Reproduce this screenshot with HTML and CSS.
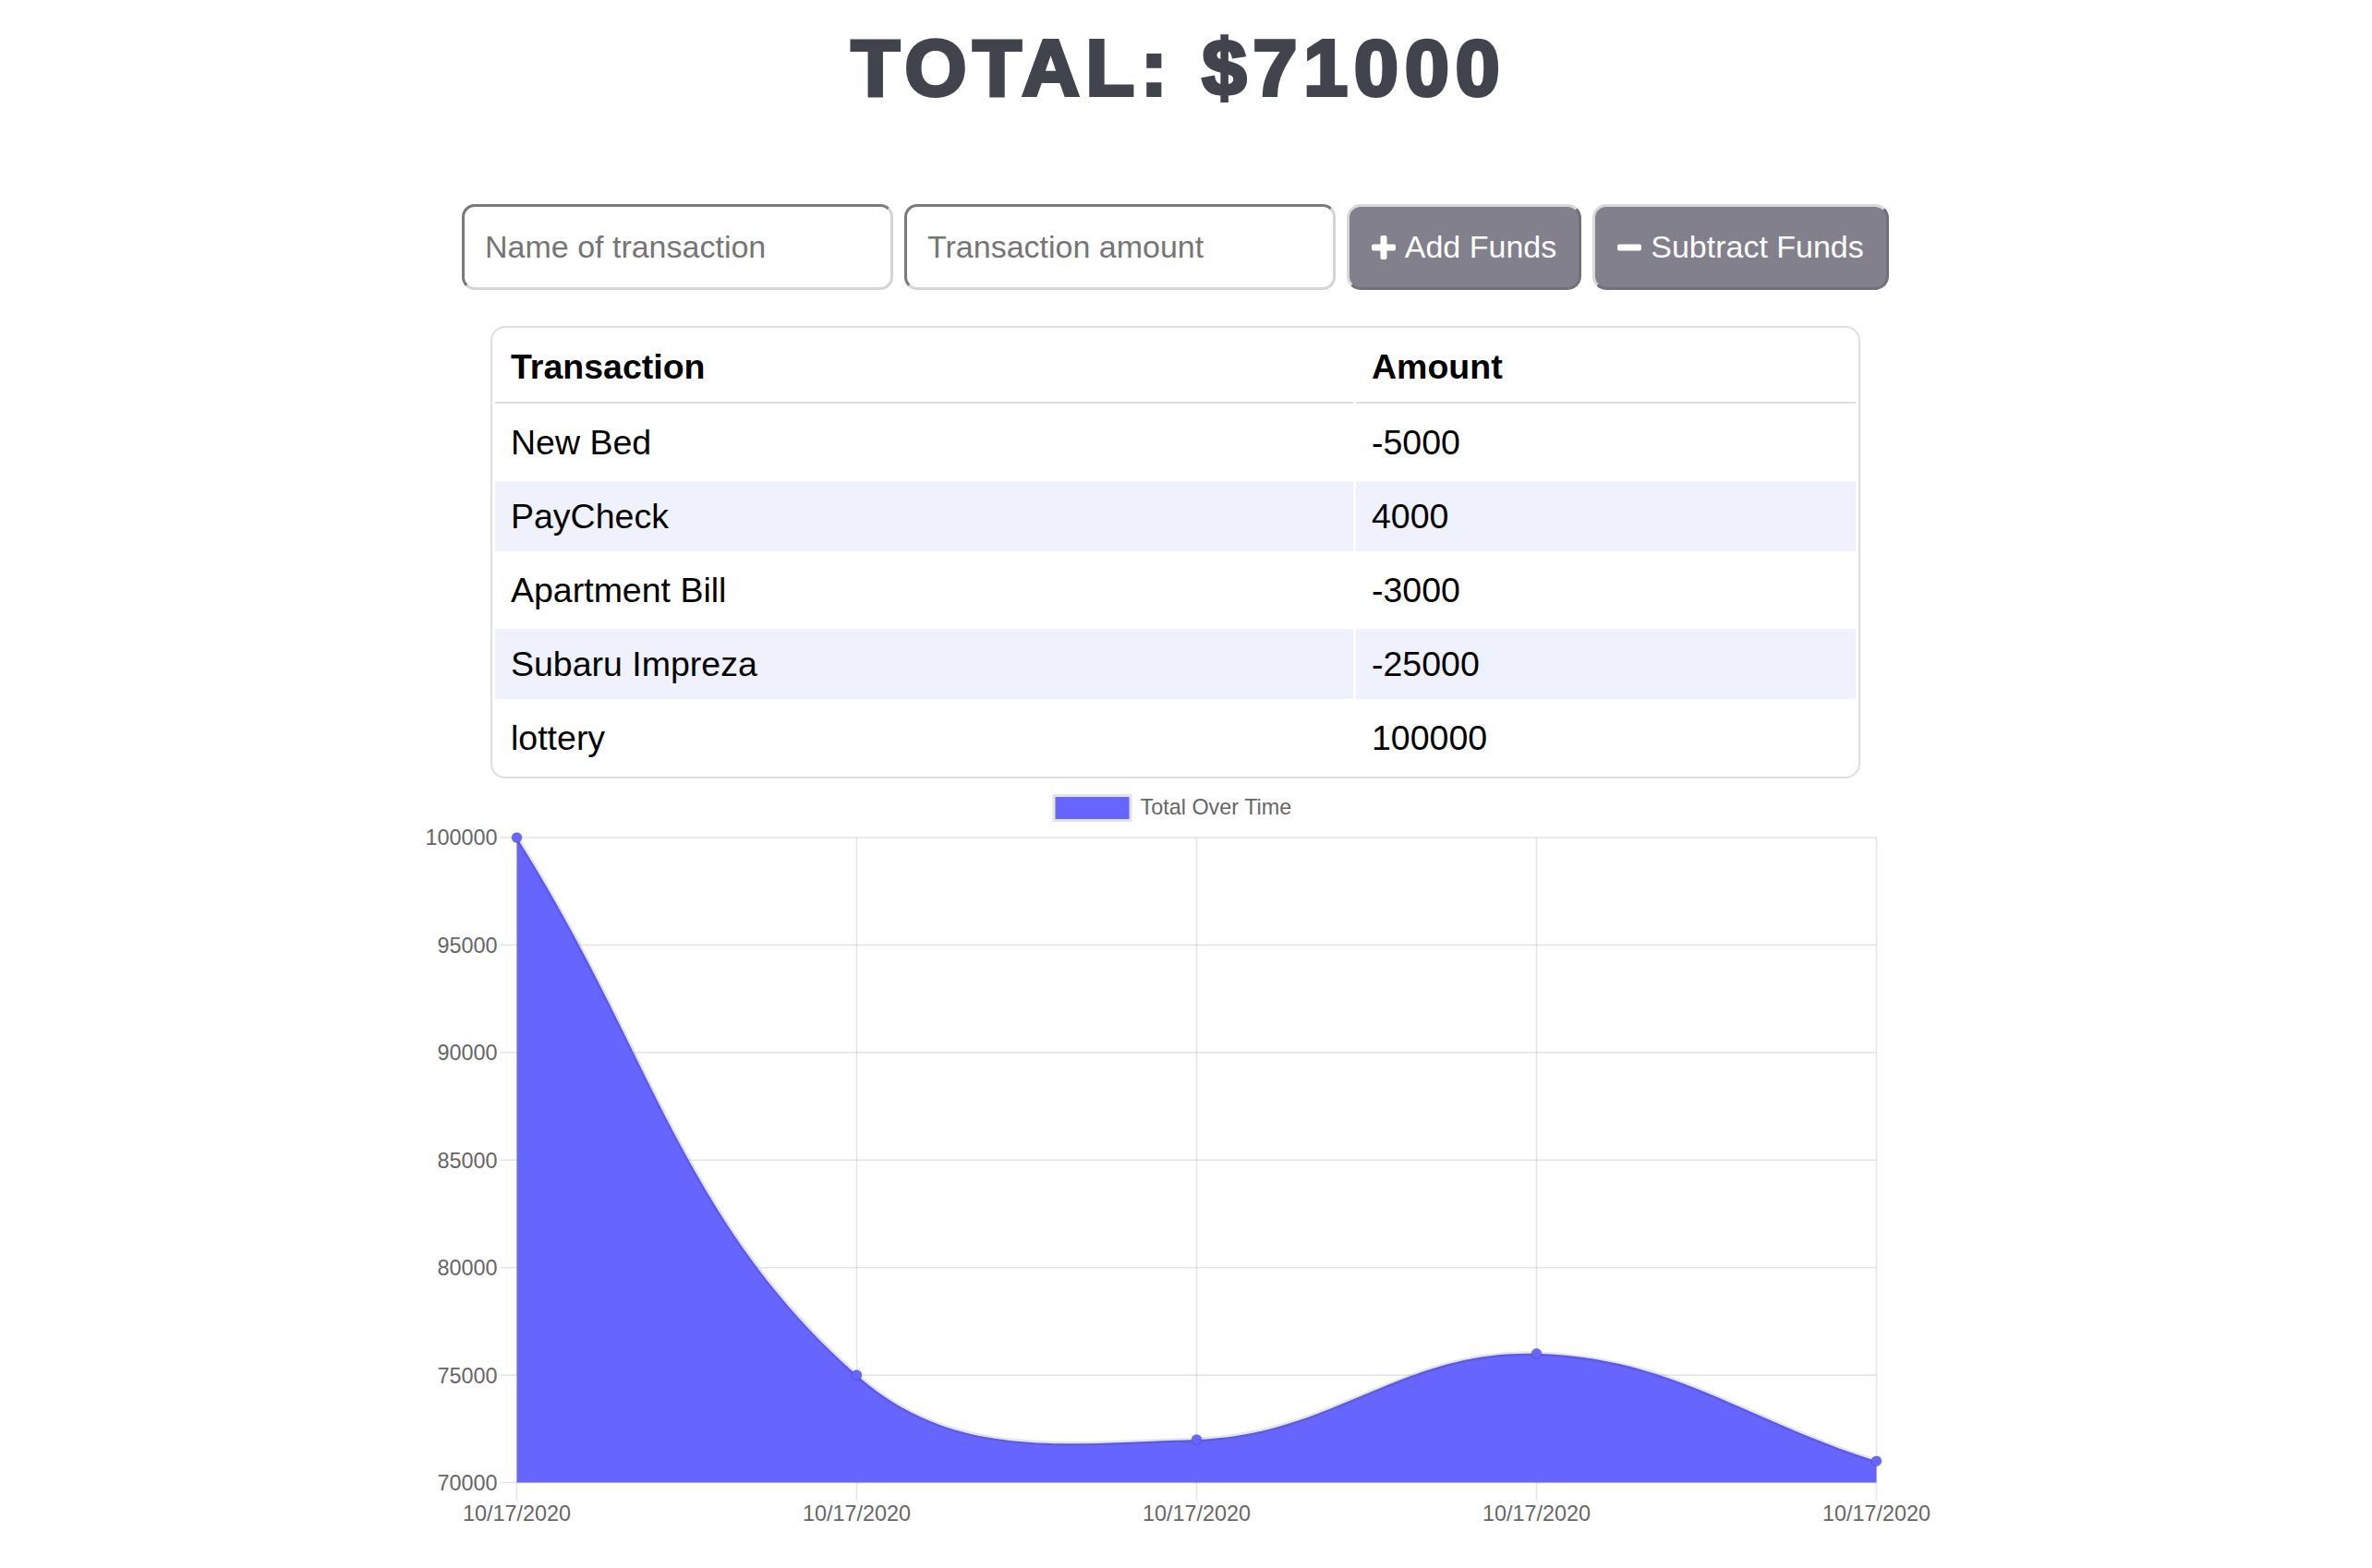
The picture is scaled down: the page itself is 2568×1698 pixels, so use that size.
FILE: index.html
```html
<!DOCTYPE html>
<html lang="en">
<head>
<meta charset="utf-8">
<title>Budget Tracker</title>
<link rel="stylesheet" href="styles.css">
</head>
<body>
<div class="page">
  <h1 class="total">TOTAL: $71000</h1>

  <div class="controls">
    <input class="field" type="text" placeholder="Name of transaction">
    <input class="field" type="text" placeholder="Transaction amount">
    <button class="btn btn-add" type="button">
      <svg class="icon" viewBox="0 0 26 26" width="26" height="26"><rect x="9.5" y="0" width="7" height="26" rx="2" fill="#fff"/><rect x="0" y="9.5" width="26" height="7" rx="2" fill="#fff"/></svg>
      <span>Add Funds</span>
    </button>
    <button class="btn btn-sub" type="button">
      <svg class="icon" viewBox="0 0 26 26" width="26" height="26"><rect x="0" y="9.5" width="26" height="7" rx="2" fill="#fff"/></svg>
      <span>Subtract Funds</span>
    </button>
  </div>

  <table class="tx">
    <thead>
      <tr><th class="c-name">Transaction</th><th class="c-amt">Amount</th></tr>
    </thead>
    <tbody>
      <tr><td>New Bed</td><td>-5000</td></tr>
      <tr><td>PayCheck</td><td>4000</td></tr>
      <tr><td>Apartment Bill</td><td>-3000</td></tr>
      <tr><td>Subaru Impreza</td><td>-25000</td></tr>
      <tr><td>lottery</td><td>100000</td></tr>
    </tbody>
  </table>

  <svg class="chart" width="1720" height="830" viewBox="412.5 843 1720 830">
    <g class="legend">
      <rect x="1140.5" y="861.5" width="83" height="27" fill="#6666ff" stroke="#e3e3e3" stroke-width="3"/>
      <text x="1234" y="882" class="lbl">Total Over Time</text>
    </g>
    <g class="grid" stroke="rgba(0,0,0,0.1)" stroke-width="1.6">
      <line x1="541" y1="907" x2="2031" y2="907"/>
      <line x1="541" y1="1023.4" x2="2031" y2="1023.4"/>
      <line x1="541" y1="1139.8" x2="2031" y2="1139.8"/>
      <line x1="541" y1="1256.3" x2="2031" y2="1256.3"/>
      <line x1="541" y1="1372.7" x2="2031" y2="1372.7"/>
      <line x1="541" y1="1489.1" x2="2031" y2="1489.1"/>
      <line x1="541" y1="1605.5" x2="2031" y2="1605.5"/>
      <line x1="559" y1="907" x2="559" y2="1625"/>
      <line x1="927" y1="907" x2="927" y2="1625"/>
      <line x1="1295" y1="907" x2="1295" y2="1625"/>
      <line x1="1663" y1="907" x2="1663" y2="1625"/>
      <line x1="2031" y1="907" x2="2031" y2="1625"/>
    </g>
    <g class="ylabels">
      <text x="538" y="915.4" text-anchor="end" class="lbl">100000</text>
      <text x="538" y="1031.8" text-anchor="end" class="lbl">95000</text>
      <text x="538" y="1148.2" text-anchor="end" class="lbl">90000</text>
      <text x="538" y="1264.7" text-anchor="end" class="lbl">85000</text>
      <text x="538" y="1381.1" text-anchor="end" class="lbl">80000</text>
      <text x="538" y="1497.5" text-anchor="end" class="lbl">75000</text>
      <text x="538" y="1613.9" text-anchor="end" class="lbl">70000</text>
    </g>
    <g class="xlabels">
      <text x="559" y="1647" text-anchor="middle" class="lbl">10/17/2020</text>
      <text x="927" y="1647" text-anchor="middle" class="lbl">10/17/2020</text>
      <text x="1295" y="1647" text-anchor="middle" class="lbl">10/17/2020</text>
      <text x="1663" y="1647" text-anchor="middle" class="lbl">10/17/2020</text>
      <text x="2031" y="1647" text-anchor="middle" class="lbl">10/17/2020</text>
    </g>
    <path fill="#6666ff" d="M559,907 C706.2,1139.8 736.3,1320.2 927,1489.1 C1030.7,1581.0 1148.8,1563.5 1295,1558.9 C1443.2,1554.2 1517.0,1461.2 1663,1465.8 C1811.4,1470.5 1883.8,1535.6 2031,1582.2 L2031,1605.5 L559,1605.5 Z"/>
    <path fill="none" stroke="rgba(0,0,0,0.1)" stroke-width="4.8" d="M559,907 C706.2,1139.8 736.3,1320.2 927,1489.1 C1030.7,1581.0 1148.8,1563.5 1295,1558.9 C1443.2,1554.2 1517.0,1461.2 1663,1465.8 C1811.4,1470.5 1883.8,1535.6 2031,1582.2"/>
    <g fill="#6666ff" stroke="rgba(0,0,0,0.1)" stroke-width="1.6">
      <circle cx="559" cy="907" r="5.5"/>
      <circle cx="927" cy="1489.1" r="5.5"/>
      <circle cx="1295" cy="1558.9" r="5.5"/>
      <circle cx="1663" cy="1465.8" r="5.5"/>
      <circle cx="2031" cy="1582.2" r="5.5"/>
    </g>
  </svg>
</div>
</body>
</html>
```

FILE: styles.css
```css
html, body {
  margin: 0;
  padding: 0;
  background: #ffffff;
}

body {
  font-family: "Liberation Sans", Arial, sans-serif;
  color: #000;
}

.page {
  width: 2545px;
  display: flex;
  flex-direction: column;
  align-items: center;
}

.total {
  margin: 30px 0 0;
  padding-left: 7px;
  font-size: 86px;
  line-height: 86px;
  font-weight: 700;
  letter-spacing: 7px;
  color: #42444d;
  -webkit-text-stroke: 4px #42444d;
  text-align: center;
}

.controls {
  margin-top: 105px;
  display: flex;
  gap: 12px;
}

.field {
  box-sizing: border-box;
  width: 467px;
  height: 93px;
  padding: 0 22px;
  border-style: solid;
  border-width: 3px;
  border-color: #7a7a7a #d4d4d4 #d4d4d4 #7a7a7a;
  border-radius: 14px;
  background: #fff;
  font-family: "Liberation Sans", Arial, sans-serif;
  font-size: 34px;
  color: #000;
  outline: none;
}

.field::placeholder {
  color: #757575;
}

.btn {
  box-sizing: border-box;
  height: 93px;
  display: flex;
  align-items: center;
  justify-content: center;
  gap: 10px;
  padding: 0;
  border-style: solid;
  border-width: 3px;
  border-color: #d8d8d8 #70707a #70707a #d8d8d8;
  border-radius: 15px;
  background: #81808c;
  color: #fff;
  font-family: "Liberation Sans", Arial, sans-serif;
  font-size: 34px;
}

.btn-add { width: 254px; }
.btn-sub { width: 321px; }

.icon {
  display: block;
  flex: none;
}

.tx {
  margin-top: 39px;
  width: 1483px;
  table-layout: fixed;
  border: 2px solid #dedede;
  border-radius: 16px;
  border-collapse: separate;
  border-spacing: 3px 4px;
  font-size: 37.5px;
}

.tx th,
.tx td {
  box-sizing: border-box;
  height: 76px;
  padding: 0 17px;
  text-align: left;
  vertical-align: middle;
}

.tx th {
  height: 78px;
  font-weight: 700;
  border-bottom: 2px solid #dedede;
}

.tx .c-name { width: 929px; }

.tx tbody tr:nth-child(even) td {
  background: #eff2fc;
}

.chart {
  display: block;
  flex: none;
}

.chart .lbl {
  font-family: "Liberation Sans", Arial, sans-serif;
  font-size: 23.4px;
  fill: #666;
}
```
